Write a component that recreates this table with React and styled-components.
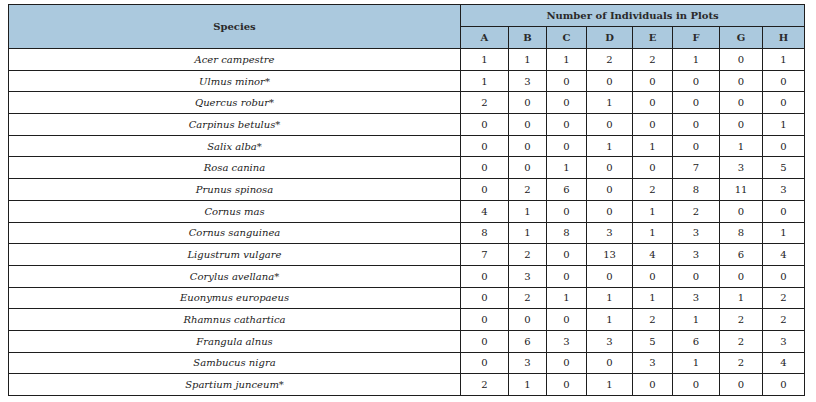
import React from "react";
import styled, { createGlobalStyle } from "styled-components";

const Global = createGlobalStyle`
  html, body { margin: 0; padding: 0; background: #ffffff; }
  body { font-family: "DejaVu Serif", "Liberation Serif", serif; }
`;

const Page = styled.div`
  padding: 4px 0 0 8px;
`;

const Table = styled.table`
  border-collapse: collapse;
  table-layout: fixed;
  width: 797px;
  border: 1px solid #1e1e1e;
  font-family: "DejaVu Serif", "Liberation Serif", serif;
  color: #222;
`;

const HeadRow = styled.tr`
  height: 22px;
  background: #abc9de;
`;

const HeadCell = styled.th`
  border: 1px solid #1e1e1e;
  font-size: 10px;
  font-weight: bold;
  color: #2a2a2a;
  text-align: center;
  padding: 0;
`;

const Row = styled.tr`
  height: 21.7px;
`;

const SpeciesCell = styled.td`
  border: 1px solid #1e1e1e;
  font-size: 10px;
  font-style: italic;
  text-align: center;
  padding: 0;
  color: #222;
`;

const Cell = styled.td`
  border: 1px solid #1e1e1e;
  font-size: 10px;
  text-align: center;
  padding: 0;
  color: #222;
`;

const widths = [452, 48, 38, 40, 46, 40, 47, 43, 42];
const plots = ["A", "B", "C", "D", "E", "F", "G", "H"];

const data = [
  ["Acer campestre", [1, 1, 1, 2, 2, 1, 0, 1]],
  ["Ulmus minor*", [1, 3, 0, 0, 0, 0, 0, 0]],
  ["Quercus robur*", [2, 0, 0, 1, 0, 0, 0, 0]],
  ["Carpinus betulus*", [0, 0, 0, 0, 0, 0, 0, 1]],
  ["Salix alba*", [0, 0, 0, 1, 1, 0, 1, 0]],
  ["Rosa canina", [0, 0, 1, 0, 0, 7, 3, 5]],
  ["Prunus spinosa", [0, 2, 6, 0, 2, 8, 11, 3]],
  ["Cornus mas", [4, 1, 0, 0, 1, 2, 0, 0]],
  ["Cornus sanguinea", [8, 1, 8, 3, 1, 3, 8, 1]],
  ["Ligustrum vulgare", [7, 2, 0, 13, 4, 3, 6, 4]],
  ["Corylus avellana*", [0, 3, 0, 0, 0, 0, 0, 0]],
  ["Euonymus europaeus", [0, 2, 1, 1, 1, 3, 1, 2]],
  ["Rhamnus cathartica", [0, 0, 0, 1, 2, 1, 2, 2]],
  ["Frangula alnus", [0, 6, 3, 3, 5, 6, 2, 3]],
  ["Sambucus nigra", [0, 3, 0, 0, 3, 1, 2, 4]],
  ["Spartium junceum*", [2, 1, 0, 1, 0, 0, 0, 0]],
];

export default function App() {
  return (
    <>
      <Global />
      <Page>
        <Table>
          <colgroup>
            {widths.map((w, i) => (
              <col key={i} style={{ width: w }} />
            ))}
          </colgroup>
          <thead>
            <HeadRow>
              <HeadCell rowSpan={2}>Species</HeadCell>
              <HeadCell colSpan={8}>Number of Individuals in Plots</HeadCell>
            </HeadRow>
            <HeadRow>
              {plots.map((p) => (
                <HeadCell key={p}>{p}</HeadCell>
              ))}
            </HeadRow>
          </thead>
          <tbody>
            {data.map(([name, vals]) => (
              <Row key={name}>
                <SpeciesCell>{name}</SpeciesCell>
                {vals.map((v, i) => (
                  <Cell key={i}>{v}</Cell>
                ))}
              </Row>
            ))}
          </tbody>
        </Table>
      </Page>
    </>
  );
}
